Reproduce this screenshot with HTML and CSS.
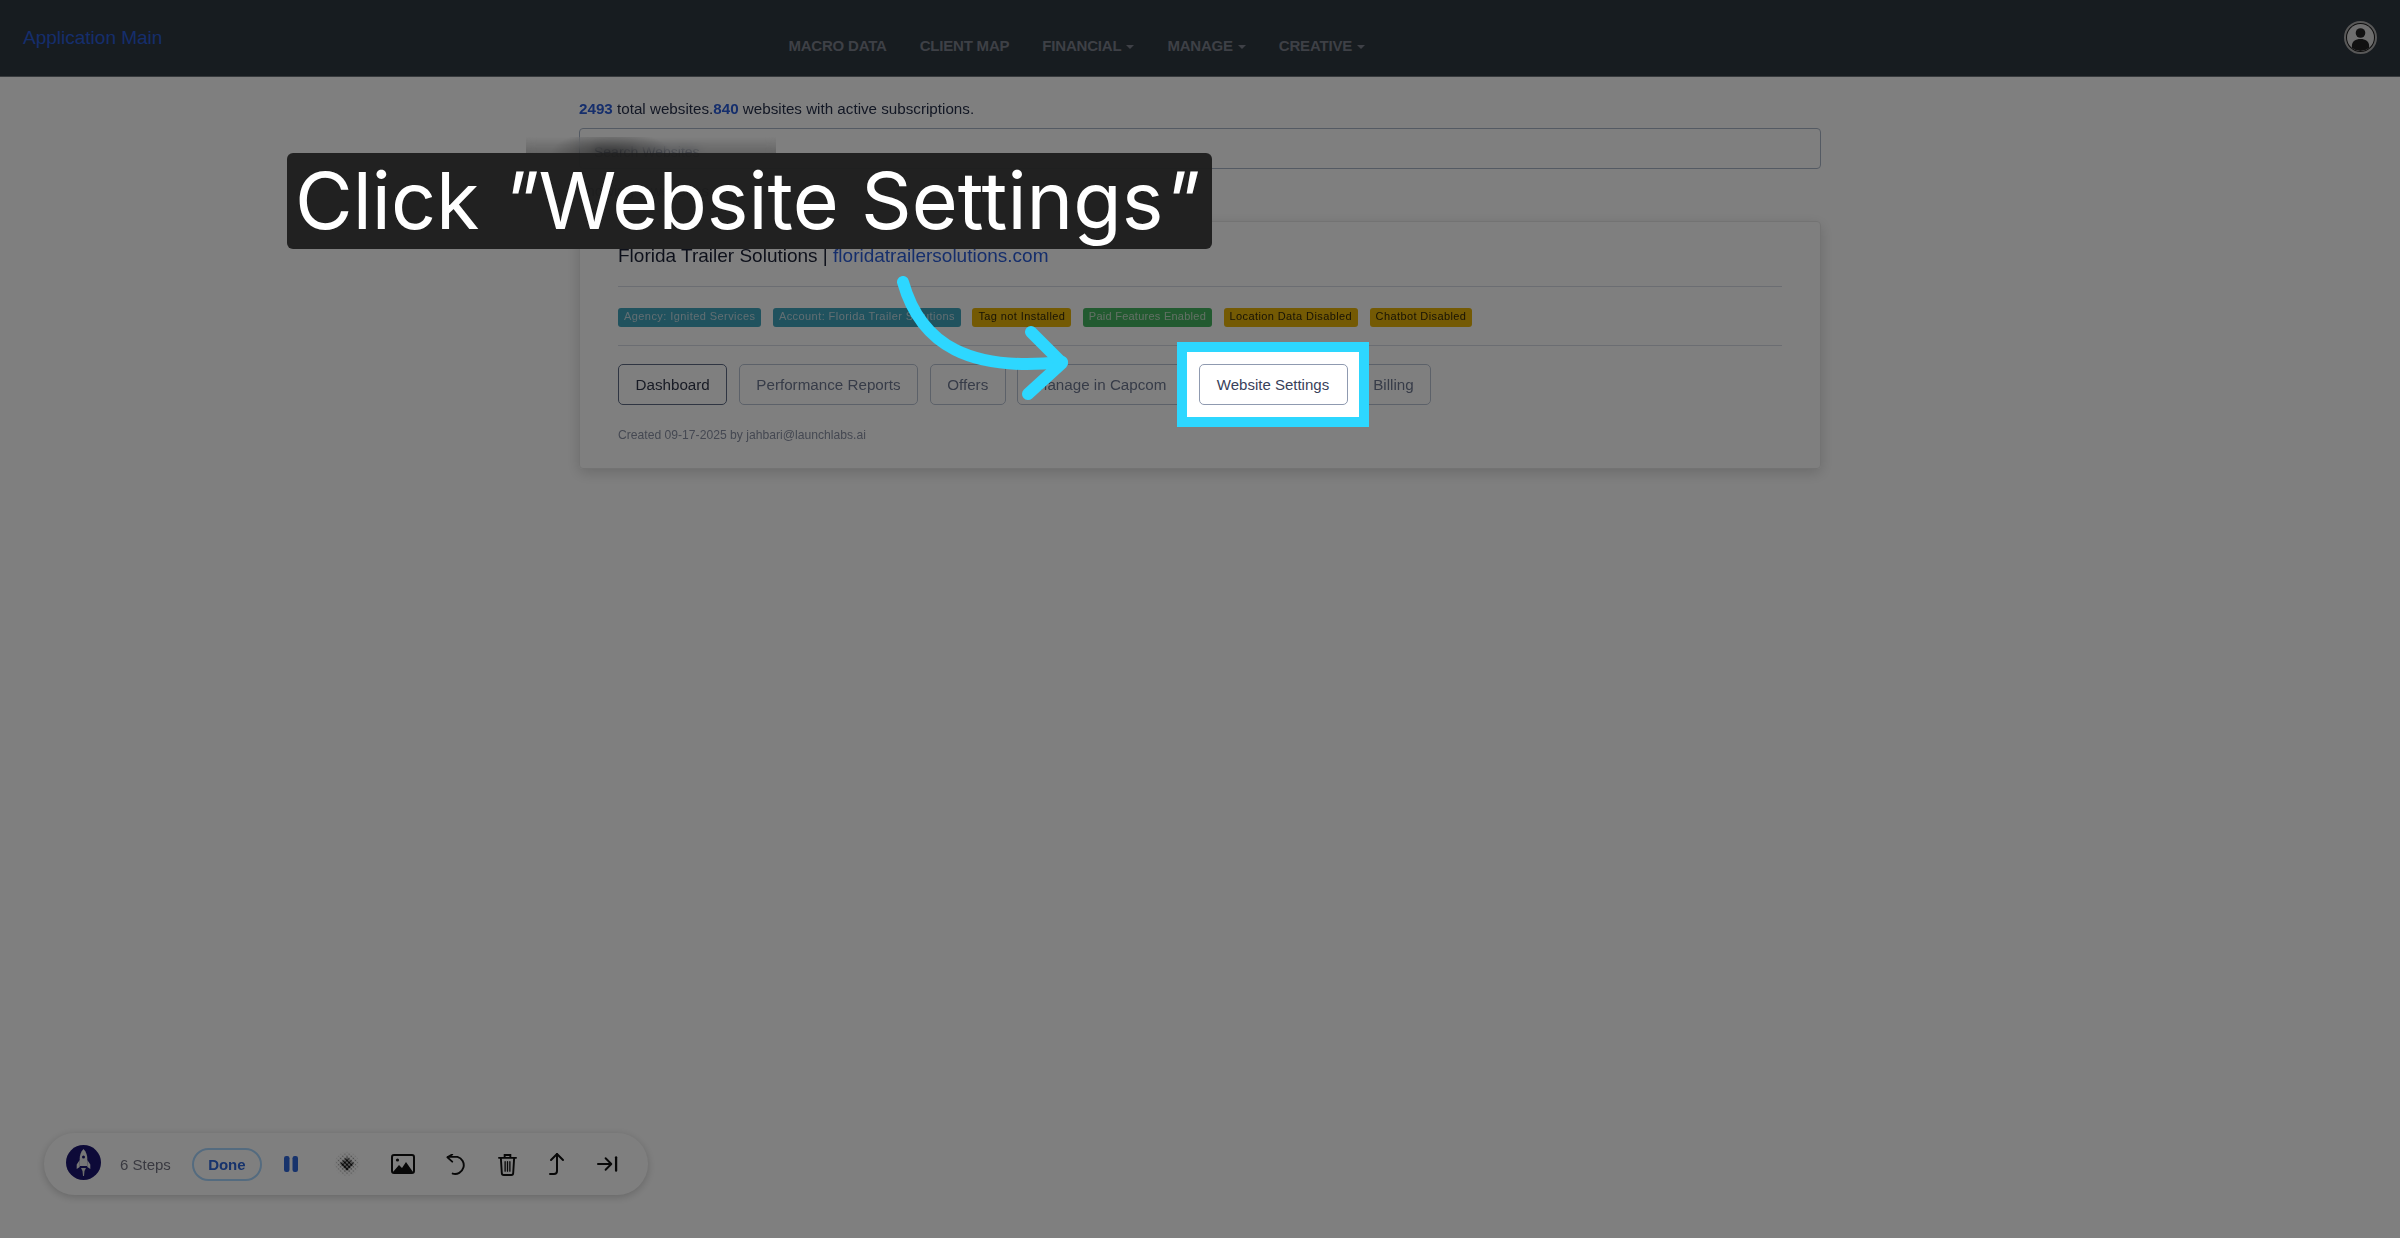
FILE: index.html
```html
<!DOCTYPE html>
<html>
    <head>
        <title>Website Settings</title>
        <link rel="stylesheet" href="styles.css">
    </head>
    <body>
        <div class="page">
            <header class="topbar">
                <a class="brand">Application Main</a>
                <nav class="nav">
                    <a>MACRO DATA</a>
                    <a>CLIENT MAP</a>
                    <a class="has-caret">FINANCIAL</a>
                    <a class="has-caret">MANAGE</a>
                    <a class="has-caret">CREATIVE</a>
                </nav>
                <svg class="avatar" viewBox="0 0 33 33">
                    <circle cx="16.500" cy="16.500" r="15.500" fill="#1a1a1a" stroke="#b0b0b0" stroke-width="2"/>
                    <circle cx="16.500" cy="16.500" r="13.500" fill="#dcdcdc"/>
                    <circle cx="16.500" cy="12" r="4.800" fill="#222"/>
                    <path d="M8 27c-1-6 3-9 8.500-9s9.500 3 8.500 9a13.500 13.500 0 0 1-17 0z" fill="#222"/>
                </svg>
            </header>

            <main class="content">
                <p class="totals"><b>2493</b> total websites.<b>840</b> websites with active subscriptions.</p>
                <div class="search">Search Websites</div>
                <p class="showing">showing 1 websites</p>

                <section class="card">
                    <h2 class="card-title">Florida Trailer Solutions | <a>floridatrailersolutions.com</a></h2>
                    <div class="badges">
                        <span class="badge teal">Agency: Ignited Services</span>
                        <span class="badge teal">Account: Florida Trailer Solutions</span>
                        <span class="badge amber">Tag not Installed</span>
                        <span class="badge green">Paid Features Enabled</span>
                        <span class="badge amber">Location Data Disabled</span>
                        <span class="badge amber">Chatbot Disabled</span>
                    </div>
                    <div class="actions">
                        <a class="btn active">Dashboard</a>
                        <a class="btn">Performance Reports</a>
                        <a class="btn">Offers</a>
                        <a class="btn">Manage in Capcom</a>
                        <a class="btn">Website Settings</a>
                        <a class="btn">Billing</a>
                    </div>
                    <p class="created">Created 09-17-2025 by jahbari@launchlabs.ai</p>
                </section>
            </main>

            <div class="toolbar">
                <svg class="logo" viewBox="0 0 35 35">
                    <circle cx="17.500" cy="17.500" r="17.500" fill="#1a1570"/>
                    <path d="M17.500 4c2.800 2.800 3.800 6.500 3.800 9.500V21h-7.600v-7.500c0-3 1-6.700 3.800-9.500z" fill="#efefef"/>
                    <path d="M13.700 15l-3 4.500V24l3-2zM21.300 15l3 4.500V24l-3-2z" fill="#efefef"/>
                    <path d="M15 23h5l-1.500 3-.5 5h-1l-.5-5z" fill="#d8d8d8"/>
                    <circle cx="17.500" cy="12" r="1.500" fill="#1a1570"/>
                </svg>
                <span class="steps">6 Steps</span>
                <a class="done">Done</a>
                <svg class="tool pause" viewBox="0 0 14 16">
                    <rect x="0" y="0" width="5.500" height="16" rx="2.200" fill="#2e66d8"/>
                    <rect x="8.500" y="0" width="5.500" height="16" rx="2.200" fill="#2e66d8"/>
                </svg>
                <svg class="tool halftone" viewBox="0 0 26 26">
                    <defs>
                        <pattern id="dots" width="3" height="3" patternUnits="userSpaceOnUse" patternTransform="rotate(45 13 13)">
                            <circle cx="1.500" cy="1.500" r="0.800" fill="#111"/>
                        </pattern>
                        <pattern id="dots-big" width="3" height="3" patternUnits="userSpaceOnUse" patternTransform="rotate(45 13 13)">
                            <circle cx="1.500" cy="1.500" r="1.350" fill="#000"/>
                        </pattern>
                        <radialGradient id="fade">
                            <stop offset="0.250" stop-color="#fff"/>
                            <stop offset="1" stop-color="#fff" stop-opacity="0"/>
                        </radialGradient>
                        <mask id="fade-mask"><circle cx="13" cy="13" r="13" fill="url(#fade)"/></mask>
                    </defs>
                    <circle cx="13" cy="13" r="13" fill="url(#dots)" mask="url(#fade-mask)"/>
                    <path d="M13 6l7 7-7 7-7-7z" fill="url(#dots-big)"/>
                </svg>
                <svg class="tool image" viewBox="0 0 24 20">
                    <rect x="1" y="1" width="22" height="18" rx="2" fill="none" stroke="#111" stroke-width="2"/>
                    <circle cx="6.500" cy="6" r="1.600" fill="#111"/>
                    <path d="M2 18l6-7 3 3 4-6 7 10z" fill="#111"/>
                </svg>
                <svg class="tool undo" viewBox="0 0 24 22" fill="none" stroke="#111" stroke-width="2" stroke-linecap="round" stroke-linejoin="round">
                    <path d="M8 20.500A9 9 0 1 0 13 3H3"/>
                    <path d="M7.500 0.500L2.500 3.500L7.500 8"/>
                </svg>
                <svg class="tool trash" viewBox="0 0 20 24" fill="none" stroke="#111" stroke-width="2" stroke-linecap="round">
                    <path d="M1 5h18M7 4V2h6v2"/>
                    <path d="M3 5l1 16a2 2 0 0 0 2 2h8a2 2 0 0 0 2-2l1-16"/>
                    <path d="M7.500 9v10M10 9v10M12.500 9v10" stroke-width="1.400"/>
                </svg>
                <svg class="tool jump" viewBox="0 0 16 24" fill="none" stroke="#111" stroke-width="2" stroke-linecap="round" stroke-linejoin="round">
                    <path d="M1 22h4c2 0 3-1 3-3V2"/>
                    <path d="M2 8l6-6 6 6"/>
                </svg>
                <svg class="tool skip" viewBox="0 0 22 16" fill="none" stroke="#111" stroke-width="2" stroke-linecap="round" stroke-linejoin="round">
                    <path d="M1 8h13M9 2l6 6-6 6"/>
                    <path d="M20 1v14" stroke-width="2.400"/>
                </svg>
            </div>
        </div>

        <div class="dim"></div>
        <div class="smudge"></div>

        <div class="highlight"><a class="btn">Website Settings</a></div>

        <svg class="arrow" viewBox="0 0 200 140" fill="none" stroke="#2dd7ff" stroke-width="12" stroke-linecap="round" stroke-linejoin="round">
            <path d="M10 6C28 70 78 96 169 86"/>
            <path d="M138 56L169 87L135 118"/>
        </svg>

        <div class="caption">Click <span class="quote">"</span>Website Settings<span class="quote">"</span></div>
    </body>
</html>
```

FILE: styles.css
```css
:root {
    --text: #39415a;
    --line: #d6dbe4;
    --primary: #2a5cd8;
}

body {
    margin: 0;
    height: 1238px;
    overflow: hidden;
    font-family: "Liberation Sans", sans-serif;
    background-color: #fff;
}
p, h2 {
    margin: 0;
}


.page {
    height: 1238px;
    filter: blur(0.7px);
}
.dim {
    position: absolute;
    inset: 0;
    background-color: rgba(0, 0, 0, 0.5);
}


.topbar {
    display: flex;
    height: 76px;
    padding-left: 23px;
    padding-right: 23px;
    background-color: #2f3840;
    border-bottom: 1px solid #6e747a;
}
.brand {
    padding-top: 27px;
    font-size: 19px;
    color: var(--primary);
}
.nav {
    display: flex;
    gap: 33px;
    margin-left: 626px;
    padding-top: 37px;
    font-size: 15px;
    font-weight: bold;
    letter-spacing: -0.2px;
    color: #7c818c;
}
.has-caret::after {
    content: "";
    display: inline-block;
    margin-left: 5px;
    vertical-align: 2px;
    border-top: 4px solid #7c818c;
    border-left: 4px solid transparent;
    border-right: 4px solid transparent;
}
.avatar {
    width: 33px;
    height: 33px;
    margin-left: auto;
    margin-top: 21px;
}


.content {
    width: 1242px;
    margin: 0 auto;
    color: var(--text);
}
.totals {
    padding-top: 23px;
    font-size: 15.200px;
    line-height: 17px;
    color: #27304a;
}
.totals b {
    color: var(--primary);
}
.search {
    height: 39px;
    margin-top: 11px;
    padding-left: 14px;
    font-size: 14px;
    line-height: 46px;
    border: 1px solid #a9b4c6;
    border-radius: 4px;
    color: #6e7891;
}
.showing {
    margin-top: 13px;
    font-size: 15px;
    line-height: 17px;
    color: #27304a;
}


.card {
    height: 246px;
    margin-top: 22px;
    padding: 0 38px;
    border: 1px solid #e6e6e6;
    border-radius: 4px;
    box-shadow: 0 4px 14px rgba(0, 0, 0, 0.16);
}
.card-title {
    padding-top: 24px;
    padding-bottom: 20px;
    font-size: 19px;
    font-weight: normal;
    line-height: 20px;
    color: #1a2035;
    border-bottom: 1px solid var(--line);
}
.card-title a {
    color: var(--primary);
}
.badges {
    display: flex;
    gap: 11.500px;
    padding-top: 21px;
    padding-bottom: 18px;
    border-bottom: 1px solid var(--line);
}
.badge {
    height: 19px;
    padding: 0 6px;
    font-size: 11px;
    letter-spacing: 0.4px;
    line-height: 17px;
    border-radius: 3px;
}
.badge.teal {
    background-color: #40a4bc;
    color: #c4dce4;
    letter-spacing: 0.43px;
}
.badge.amber {
    background-color: #e8b408;
    color: #33290a;
}
.badge.green {
    background-color: #44b460;
    color: #c4e0c8;
    letter-spacing: 0.25px;
}
.actions {
    display: flex;
    gap: 11.500px;
    margin-top: 18px;
}
.btn {
    display: block;
    height: 39px;
    padding: 0 16.500px;
    font-size: 15.200px;
    line-height: 39px;
    border: 1px solid #b8c2d2;
    border-radius: 5px;
    color: #6e7891;
    background-color: #fff;
}
.btn.active {
    border-color: #5e6b85;
    color: #31374a;
}
.created {
    margin-top: 22px;
    font-size: 12.150px;
    line-height: 16px;
    color: #8a91a4;
}


.smudge {
    position: absolute;
    left: 526px;
    top: 137px;
    width: 250px;
    height: 16px;
    backdrop-filter: blur(5px);
    background:
        radial-gradient(ellipse 60px 22px at 85px 100%, rgba(0, 0, 0, 0.42), transparent),
        linear-gradient(to bottom, transparent, rgba(0, 0, 0, 0.2));
}


.toolbar {
    position: absolute;
    left: 44px;
    top: 1133px;
    display: flex;
    align-items: center;
    width: 604px;
    height: 62px;
    padding-left: 22px;
    box-sizing: border-box;
    background-color: #fff;
    border-radius: 31px;
    box-shadow: 0 2px 8px rgba(0, 0, 0, 0.2);
}
.logo {
    width: 35px;
    height: 35px;
    margin-top: -4px;
}
.steps {
    margin-left: 19px;
    font-size: 15px;
    color: #747482;
}
.done {
    width: 70px;
    height: 33px;
    margin-left: 21px;
    font-size: 15px;
    font-weight: bold;
    line-height: 30px;
    text-align: center;
    box-sizing: border-box;
    border: 2px solid #a8d6ff;
    border-radius: 17px;
    color: #2e66d8;
}
.tool {
    flex-shrink: 0;
}
.pause {
    width: 14px;
    height: 16px;
    margin-left: 22px;
}
.halftone {
    width: 26px;
    height: 26px;
    margin-left: 36px;
}
.image {
    width: 24px;
    height: 20px;
    margin-left: 31px;
}
.undo {
    width: 23px;
    height: 21px;
    margin-left: 30px;
}
.trash {
    width: 19px;
    height: 23px;
    margin-left: 30px;
}
.jump {
    width: 16px;
    height: 24px;
    margin-left: 32px;
}
.skip {
    width: 21px;
    height: 16px;
    margin-left: 32px;
}


.highlight {
    position: absolute;
    left: 1177px;
    top: 342px;
    width: 192px;
    height: 85px;
    box-sizing: border-box;
    display: flex;
    align-items: center;
    justify-content: center;
    background-color: #fff;
    border: 10px solid #2dd7ff;
}
.highlight .btn {
    color: #39415a;
    box-sizing: border-box;
    width: 149px;
    height: 41px;
    padding: 0;
    font-size: 15px;
    text-align: center;
    border-color: #8f9ab0;
}
.arrow {
    position: absolute;
    left: 893px;
    top: 276px;
    width: 200px;
    height: 140px;
}
.caption {
    position: absolute;
    left: 287px;
    top: 153px;
    width: 925px;
    height: 96px;
    box-sizing: border-box;
    padding-left: 8px;
    font-family: Inter, sans-serif;
    font-size: 79px;
    line-height: 95px;
    white-space: nowrap;
    font-variant-ligatures: none;
    color: #fff;
    background-color: rgba(30, 30, 30, 0.97);
    border-radius: 6px;
}
.quote {
    display: inline-block;
    transform: skewX(-12deg);
}
```
